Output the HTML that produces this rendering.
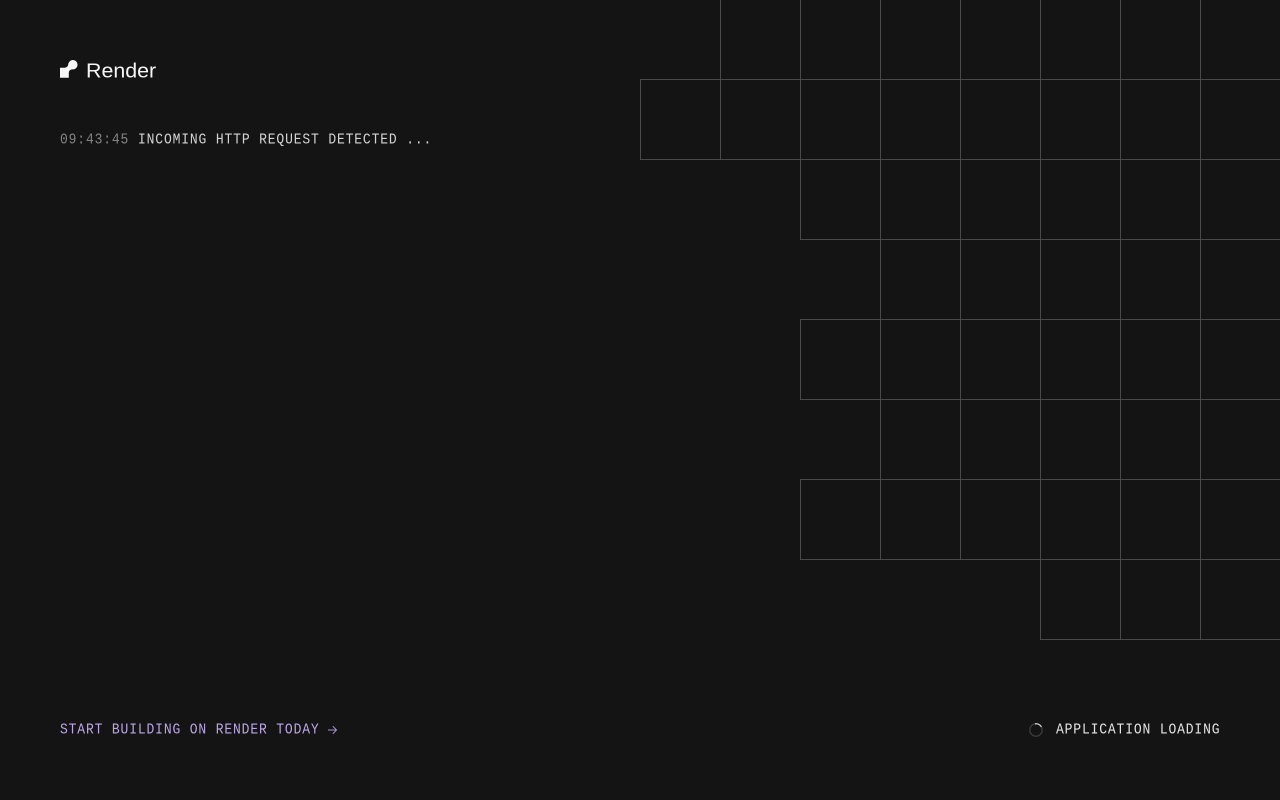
<!DOCTYPE html>
<html lang="en">
<head>
<meta charset="utf-8">
<title>Render</title>
<style>
html,body{margin:0;padding:0;width:1280px;height:800px;overflow:hidden;background:#141414}
body{position:relative;font-family:"Liberation Mono",monospace;font-size:13px;line-height:16px}
.t{position:absolute;white-space:pre;letter-spacing:.85px;transform:scaleY(1.12);transform-origin:0 50%}
svg{position:absolute;left:0;top:0}
</style>
</head>
<body>
<svg width="1280" height="800" viewBox="0 0 1280 800" shape-rendering="crispEdges">
<g fill="#4a4a4a">
<rect x="640" y="79" width="640" height="1"/>
<rect x="640" y="159" width="640" height="1"/>
<rect x="800" y="239" width="480" height="1"/>
<rect x="800" y="319" width="480" height="1"/>
<rect x="800" y="399" width="480" height="1"/>
<rect x="800" y="479" width="480" height="1"/>
<rect x="800" y="559" width="480" height="1"/>
<rect x="1040" y="639" width="240" height="1"/>
<rect x="640" y="79" width="1" height="81"/>
<rect x="720" y="0" width="1" height="160"/>
<rect x="800" y="0" width="1" height="240"/>
<rect x="800" y="319" width="1" height="81"/>
<rect x="800" y="479" width="1" height="81"/>
<rect x="880" y="0" width="1" height="560"/>
<rect x="960" y="0" width="1" height="560"/>
<rect x="1040" y="0" width="1" height="640"/>
<rect x="1120" y="0" width="1" height="640"/>
<rect x="1200" y="0" width="1" height="640"/>
</g>
</svg>

<svg width="90" height="90" viewBox="0 0 90 90" style="left:0;top:0">
<path d="M60 67.8H63.5C66.5 67.8 68 66.5 68.2 64.5C68.5 62 70.5 60 72.8 60C75.4 60 77.5 62.1 77.5 64.7C77.5 67.3 75.4 69.4 72.8 69.4C70.5 69.4 68.8 70.5 68.8 73V77.8H60Z" fill="#f7f7f7"/>
</svg>
<div style="position:absolute;left:86px;top:58px;font:21.4px/26px 'Liberation Sans',sans-serif;color:#f5f5f5;transform:scaleY(.96);transform-origin:0 50%">Render</div>

<div class="t" style="left:60px;top:132px;color:#858585">09:43:45</div>
<div class="t" style="left:138px;top:132px;color:#d4d4d4">INCOMING HTTP REQUEST DETECTED ...</div>

<div class="t" style="left:60px;top:722px;color:#bba6e8">START BUILDING ON RENDER TODAY</div>
<svg width="12" height="10" viewBox="0 0 12 10" style="left:327px;top:725px" fill="none" stroke="#a593cc" stroke-width="1">
<path d="M1 5H9.5M5.8 1.2L9.5 5L5.8 8.8"/>
</svg>

<svg width="16" height="16" viewBox="0 0 16 16" style="left:1028px;top:722px" fill="none" stroke-width="1.3">
<circle cx="8" cy="8" r="6.2" stroke="#3c3c3c"/>
<path d="M6.9 1.9A6.2 6.2 0 0 1 13.4 4.9" stroke="#cfcfcf"/>
</svg>
<div class="t" style="left:1056px;top:722px;color:#e4e4e4">APPLICATION LOADING</div>
</body>
</html>
